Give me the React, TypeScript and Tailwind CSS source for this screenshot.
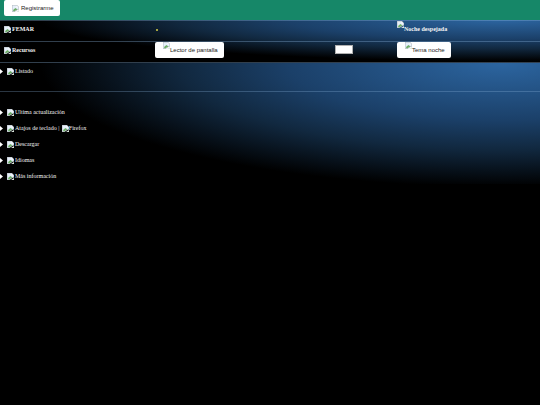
import React from "react";

function Broken({ className = "" }: { className?: string }) {
  return (
    <svg className={"inline-block h-[7px] w-[7px] shrink-0 " + className} viewBox="0 0 14 14" aria-hidden="true">
      <path d="M0 0h10l4 4v5l-3 1-3 2-3 2H0z" fill="#b4bac0" />
      <path d="M1 1h8l4 4v3l-3 1-3 2-3 2H1z" fill="#e6effa" />
      <path d="M9 1l4 4H9z" fill="#fff" />
      <path d="M2 12l1-3 4-3 4 3-4 2-3 2z" fill="#6fae68" />
      <path d="M14 10v4H8l3-2z" fill="#dfeae2" />
    </svg>
  );
}

const BTN =
  "flex h-4 items-center rounded-[2px] bg-white pl-2 pr-1.5 font-['Liberation_Sans',Arial,sans-serif] text-[6px] font-normal leading-4 text-[#222]";
const ROW =
  "grid h-[21px] grid-cols-[151px_180px_62px_1fr] items-start border-t border-[#8cb4dc]/35 pl-1 text-[6px] font-bold";

function Item({ text, extra }: { text: string; extra?: string }) {
  return (
    <details className="h-4 text-[6px] leading-4">
      <summary className="flex cursor-pointer list-none items-center">
        <svg className="mr-1 h-[5px] w-[3px]" viewBox="0 0 3 5" aria-hidden="true">
          <path d="M0 0l3 2.5L0 5z" fill="#fff" />
        </svg>
        <Broken />
        <span className="ml-px whitespace-pre">{text}</span>
        {extra && (
          <>
            <Broken className="ml-px" />
            <span>{extra}</span>
          </>
        )}
      </summary>
    </details>
  );
}

export default function App() {
  return (
    <div className="min-h-screen bg-black font-['Liberation_Serif','Times_New_Roman',serif] text-[#f4f4f4]">
      <header className="h-5 bg-[#168768] pl-1">
        <button className={BTN}>
          <Broken className="mr-0.5" />
          Registrarme
        </button>
      </header>
      <div className="bg-[radial-gradient(92%_105%_at_93%_0,#2c65a0,#1b4069_43%,#11283f_65%,#000_93%)]">
        <section className={ROW}>
          <h1 className="flex h-4 items-center">
            <Broken className="mr-px" />
            FEMAR
          </h1>
          <span className="ml-px pt-2">
            <i className="block h-0.5 w-0.5 rounded-full bg-[#d8d048]" />
          </span>
          <span />
          <p className="flex items-start">
            <Broken />
            <span className="leading-4">Noche despejada</span>
          </p>
        </section>
        <section className={ROW}>
          <h2 className="flex h-4 items-center">
            <Broken className="mr-px" />
            Recursos
          </h2>
          <div className="flex">
            <button className={BTN}>
              <Broken className="self-start" />
              Lector de pantalla
            </button>
          </div>
          <input aria-label="Valor" className="mt-[3px] h-[9px] w-[18px] border border-[#b0b0b0] bg-white" />
          <div className="flex">
            <button className={BTN}>
              <Broken className="self-start" />
              Tema noche
            </button>
          </div>
        </section>
      </div>
      <main className="h-[122px] border-t border-[#8cb4dc]/35 bg-[radial-gradient(92%_110%_at_93%_0,#2c65a0,#1b4069_43%,#11283f_65%,#000_93%)]">
        <div className="h-[29px] border-b border-[#8cb4dc]/30">
          <Item text="Listado" />
        </div>
        <div className="pt-3">
          <Item text="Ultima actualización" />
          <Item text="Atajos de teclado | " extra="Firefox" />
          <Item text="Descargar" />
          <Item text="Idiomas" />
          <Item text="Más información" />
        </div>
      </main>
    </div>
  );
}
